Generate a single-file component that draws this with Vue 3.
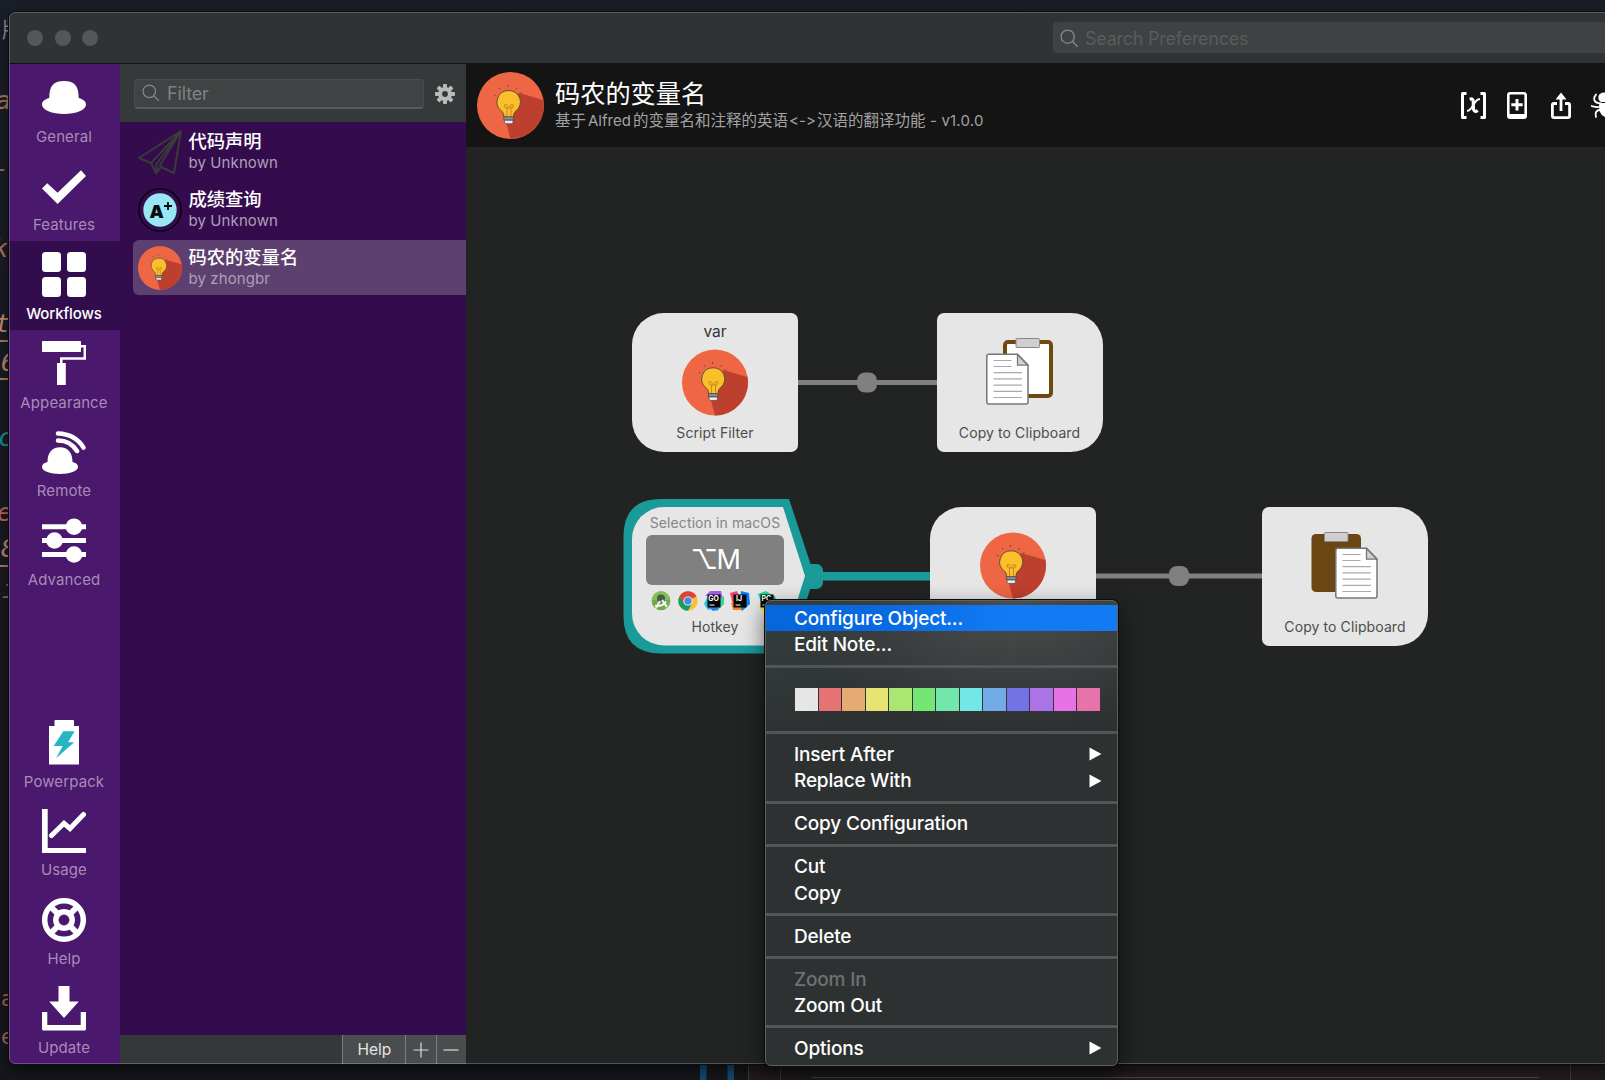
<script setup>
const topTabs = [
  { name: 'General', icon: 'hat' },
  { name: 'Features', icon: 'check' },
  { name: 'Workflows', icon: 'grid', active: true },
  { name: 'Appearance', icon: 'roller' },
  { name: 'Remote', icon: 'remote' },
  { name: 'Advanced', icon: 'sliders' },
]
const bottomTabs = [
  { name: 'Powerpack', icon: 'battery' },
  { name: 'Usage', icon: 'chart' },
  { name: 'Help', icon: 'ring' },
  { name: 'Update', icon: 'download' },
]
const groups = [topTabs, bottomTabs]

const icons = {
  hat: '<path d="M7.3 23C7.3 11.500 11 6 22 6s14.700 5.500 14.700 17c5 1.500 7.300 3.500 7.300 6.500 0 5.500-10 9.500-22 9.500S0 35 0 29.500c0-3 2.300-5 7.300-6.500z"/>',
  check: '<path d="M0 24.500 5.200 19.200 15.600 28.800 39 6.300 44 12 15.600 40z"/>',
  grid: '<rect width="19" height="20" rx="3.500"/><rect x="25" width="19" height="20" rx="3.500"/><rect y="25" width="19" height="20" rx="3.500"/><rect x="25" y="25" width="19" height="20" rx="3.500"/>',
  roller: '<rect width="39" height="11" rx=".8"/><path d="M39 5.200h3.800v12.400H19.300V23" fill="none" stroke="#fff" stroke-width="2.500"/><rect x="15" y="22" width="8.800" height="22"/>',
  remote: '<path d="M5.500 32C5.500 23 10 17.300 18 17.300S30.500 23 30.500 32C34 32.500 36 34.500 36 37c0 4-8 7-18 7S0 41 0 37c0-2.500 2-4.500 5.500-5z"/><path d="M16 3.600c11 .3 20 5.200 25.500 14M16 10.500c8 0 14.500 3.500 19 10.500" fill="none" stroke="#fff" stroke-width="4.500" stroke-linecap="round"/>',
  sliders: '<path d="M0 6.200h44v5H0zM0 20h44v5H0zM0 34h44v5H0z"/><circle cx="32" cy="8.700" r="8.300"/><circle cx="12.500" cy="22.500" r="8.300"/><circle cx="32" cy="36.500" r="8.300"/>',
  battery: '<path d="M12.500 1q0-1 1-1h17.500q1 0 1 1v5h5v38.500H7V6h5.500z"/><path d="M21.300 11.300h11.400L26 22.300h6.200L14 38.300 20.700 26h-9z" fill="#27b5c6"/>',
  chart: '<path d="M0 0h5.700v39H44v5H0z"/><path d="m9.500 26.500 12.500-12.200 6 5.200L41.500 5.500" fill="none" stroke="#fff" stroke-width="5" stroke-linecap="round"/>',
  ring: '<g fill="none" stroke="#fff"><circle cx="22" cy="22" r="19.300" stroke-width="5.500"/><circle cx="22" cy="22" r="8.200" stroke-width="5.500"/><path d="m7.500 7.500 8 8M36.500 7.500l-8 8M7.500 36.500l8-8M36.500 36.500l-8-8" stroke-width="6"/></g>',
  download: '<path d="M16.500 0h11v15.500h9.300L22 32 7.200 15.500h9.300zM0 26h5.300v13h33.400V26H44v17q0 1.500-1.500 1.500h-41Q0 44.500 0 43z"/>',
}

const workflows = [
  { name: '代码声明', by: 'by Unknown', icon: 'plane' },
  { name: '成绩查询', by: 'by Unknown', icon: 'grade' },
  { name: '码农的变量名', by: 'by zhongbr', icon: 'bulb', active: true },
]

const bulb = `
  <circle cx="33" cy="33" r="33" fill="#ee6644"/>
  <path d="M41 20.500 65.500 27.500A33 33 0 0 1 33 66L28.500 49z" fill="#bd402f"/>
  <path d="M31 18.300a11.200 11.200 0 0 0-7 20c2 1.800 2.500 3 2.500 6h9.500c0-3 .5-4.200 2.500-6a11.200 11.200 0 0 0-7.500-20z" fill="#fcbf29" stroke="#4b4a45" stroke-width=".9"/>
  <path d="M29.500 44V35.500q-2.500 0-2.500-2t2-1.500 1 3.500h3q-1-3.500 1-3.500t2 1.500-2.500 2V44" fill="none" stroke="#b3701f" stroke-width=".7"/>
  <rect x="26.500" y="44.300" width="9.500" height="3" fill="#8e8f93" stroke="#4b4a45" stroke-width=".7"/>
  <path d="M27 47.500h8.500v2.500l-1.500 1h-5.500L27 50z" fill="#e8eaed" stroke="#4b4a45" stroke-width=".7"/>
  <path d="M30.500 12.500v2M22 15.500l1 1.500M39.500 15.500l-1 1.500M17 22.500l1.500 1M44.500 20l-1.500 1" stroke="#5a3b33" stroke-width=".8"/>`

const paper = `
  <path d="M2.500.8H31.500L42 11.500V48.500q0 2-2 2H2.800q-2 0-2-2V2.800q0-2 2-2z" fill="#fff" stroke="#777" stroke-width="1.500"/>
  <path d="M31.500 1v10.700h10.300z" fill="#d2d2d2" stroke="#777" stroke-width="1.300"/>
  <path d="M7.500 7h18M7.500 13h18M7.500 19.200h28.500M7.500 25.400h28.500M7.500 31.600h28.500M7.500 37.800h28.500M7.500 44h28.500" stroke="#aaa" stroke-width="1.200"/>`
const clip = '<rect x="13" y="-1.500" width="23.500" height="9" rx=".8" fill="#cfcfcf" stroke="#888" stroke-width="1"/>'
const copyFront = `
  <g transform="translate(17 2)"><rect x="2" y="2" width="46" height="54" rx="3" fill="#fff" stroke="#70490f" stroke-width="4"/>${clip}</g>
  <g transform="translate(0 15.500)">${paper}</g>`
const copyBack = `
  <g transform="translate(.5 2)"><rect width="49.500" height="58" rx="4.500" fill="#6b4612"/>${clip}</g>
  <g transform="translate(24 15.500)">${paper}</g>`

const menu = [
  { label: 'Configure Object...', hot: true },
  { label: 'Edit Note...' },
  { sep: true }, { colors: true }, { sep: true },
  { label: 'Insert After', sub: true },
  { label: 'Replace With', sub: true },
  { sep: true },
  { label: 'Copy Configuration' },
  { sep: true },
  { label: 'Cut' },
  { label: 'Copy' },
  { sep: true },
  { label: 'Delete' },
  { sep: true },
  { label: 'Zoom In', off: true },
  { label: 'Zoom Out' },
  { sep: true },
  { label: 'Options', sub: true },
]
const colors = ['#e6e6e6', '#e67373', '#e6ab73', '#e6e373', '#abe673', '#73e673', '#73e6ab', '#73e6e6', '#73abe6', '#7373e6', '#ab73e6', '#e673e6', '#e673ab']

// Pieces of the code editor that peek out from behind the window
const scraps = [
  { t: '版', x: 2, y: 30, c: '#8f9296', up: true },
  { t: 'a', x: -4, y: 101, c: '#a8765c' },
  { t: '-', x: -6, y: 169, c: '#8a6a56' },
  { t: 'k', x: -7, y: 249, c: '#a8765c' },
  { t: 't', x: -5, y: 324, c: '#c08a6a', line: 341 },
  { t: '6', x: 1, y: 363, c: '#b98668', line: 379 },
  { t: 'c', x: -2, y: 438, c: '#16898c' },
  { t: 'e', x: -3, y: 513, c: '#b5655a' },
  { t: '8', x: 1, y: 549, c: '#b98668', line: 566 },
  { t: 'i', x: 2, y: 590, c: '#8a6a56' },
  { t: 'a', x: 1, y: 999, c: '#a5625a', up: true },
  { t: 'e', x: 1, y: 1037, c: '#a5625a', up: true },
]
</script>

<template>
  <div class="desktop">
    <div class="behind">
      <template v-for="s in scraps" :key="s.y">
        <span class="scrap" :class="{ up: s.up }" :style="{ left: s.x + 'px', top: s.y - 15 + 'px', color: s.c }">{{ s.t }}</span>
        <i v-if="s.line" class="rule" :style="{ top: s.line - 1 + 'px' }"></i>
      </template>
      <svg class="under" width="1605" height="17">
        <rect x="748" width="857" height="17" fill="#231d1f" />
        <rect x="700" width="6.500" height="17" fill="#134a72" /><rect x="727.500" width="6.500" height="17" fill="#134a72" />
        <path d="M748.500 0V17M780.500 0V17M1570.500 0V17" stroke="#413b3d" />
        <path d="M812 14.500H1539" stroke="#4a4646" />
      </svg>
    </div>

    <div class="window">
      <header class="titlebar">
        <div class="lights"><i></i><i></i><i></i></div>
        <div class="search">
          <svg width="19" height="19" viewBox="0 0 19 19" fill="none" stroke="#85888a" stroke-width="1.300"><circle cx="7.700" cy="7.700" r="6.600" /><path d="m12.500 12.500 5.200 5.200" /></svg>
          <span>Search Preferences</span>
        </div>
      </header>

      <div class="body">
        <nav class="tabs">
          <div v-for="(g, n) in groups" :key="n">
            <div v-for="t in g" :key="t.name" class="tab" :class="{ active: t.active }">
              <svg width="44" height="45" viewBox="0 0 44 45" fill="#fff" v-html="icons[t.icon]"></svg>
              <span>{{ t.name }}</span>
            </div>
          </div>
        </nav>

        <aside class="list">
          <div class="filterbar">
            <div class="filter">
              <svg width="18" height="18" viewBox="0 0 19 19" fill="none" stroke="#85888a" stroke-width="1.300"><circle cx="7.700" cy="7.700" r="6.600" /><path d="m12.500 12.500 5.200 5.200" /></svg>
              <span>Filter</span>
            </div>
            <svg class="gear" width="20" height="20" viewBox="-10 -10 20 20">
              <g fill="#b9bbbb"><rect v-for="a in 8" :key="a" x="-2" y="-10" width="4" height="6" rx=".8" :transform="`rotate(${a * 45})`" /></g>
              <circle r="4.900" fill="none" stroke="#b9bbbb" stroke-width="4" />
            </svg>
          </div>
          <div class="rows">
            <div v-for="w in workflows" :key="w.name" class="row" :class="{ active: w.active }">
              <svg v-if="w.icon === 'bulb'" width="44" height="44" viewBox="0 0 66 66" v-html="bulb"></svg>
              <svg v-else-if="w.icon === 'plane'" width="44" height="44" viewBox="0 0 44 44" fill="none" stroke="#3a3a36" stroke-width="2" stroke-linejoin="round">
                <path d="M43 1 1 28l12 5 5 10 5-6 13 6zM43 1 13 33M43 1 18.500 34v8M43 1 22 35l2 2" />
              </svg>
              <svg v-else width="44" height="44" viewBox="0 0 44 44">
                <circle cx="22" cy="22" r="21.200" fill="none" stroke="#0a0410" stroke-width="1.600" />
                <circle cx="22" cy="22" r="16.700" fill="#97e7f5" />
                <text x="11.500" y="29.500" class="gradeA">A</text>
                <path d="M30 14v8M26 18h8" stroke="#0a0a10" stroke-width="1.900" />
              </svg>
              <div class="names"><b>{{ w.name }}</b><span>{{ w.by }}</span></div>
            </div>
          </div>
          <div class="footer">
            <span class="help">Help</span>
            <span><svg width="16" height="16" stroke="#dcdddd" stroke-width="1.200"><path d="M8 .5v15M.5 8h15" /></svg></span>
            <span><svg width="16" height="16" stroke="#dcdddd" stroke-width="1.200"><path d="M.5 8h15" /></svg></span>
          </div>
        </aside>

        <main class="editor">
          <div class="head">
            <svg width="67" height="67" viewBox="0 0 66 66" v-html="bulb"></svg>
            <div class="titles">
              <h1>码农的变量名</h1>
              <p>基于<em>Alfred</em>的变量名和注释的英语<em class="arrow">&lt;-&gt;</em>汉语的翻译功能<em class="ver"> - v1.0.0</em></p>
            </div>
            <div class="tools">
              <svg width="25" height="27" viewBox="0 0 25 27" fill="none" stroke="#fff">
                <path d="M5.500 1.500H1.500V25.500H5.500M19.500 1.500h4V25.500h-4" stroke-width="3" stroke-linejoin="round" />
                <path d="M8.800 7.500C12.500 5.500 12.500 9 12.300 13s.5 8.500 4.500 5.500" stroke-width="3.200" />
                <path d="M19 7.300C15.500 6.500 14 10.500 12.300 13S9 19.500 6 18.700" stroke-width="1.900" />
              </svg>
              <svg width="20" height="27" viewBox="0 0 20 27" fill="none" stroke="#fff">
                <rect x="1.300" y="1.300" width="17.400" height="24.400" rx="2" stroke-width="2.600" /><path d="M1 24h18" stroke-width="4" /><path d="M10 7v11.500M4.300 12.800h11.400" stroke-width="3" />
              </svg>
              <svg class="share" width="20" height="27" viewBox="0 0 20 27" fill="none" stroke="#fff" stroke-width="2.800">
                <path d="M6 11.500H2.800Q1.400 11.500 1.400 13V24q0 1.600 1.600 1.600H17q1.600 0 1.600-1.600V13q0-1.500-1.400-1.500H14" /><path d="M10 19V6" /><path d="m4.500 7.500 5.500-7 5.500 7z" fill="#fff" stroke="none" />
              </svg>
              <svg width="26" height="27" viewBox="0 0 26 27" fill="none" stroke="#fff" stroke-width="1.800">
                <path d="M10 11.500C3 11 1.500 7 5 2.500M9 14.500c-3 1.500-5 .5-8.500-.5M9 18c-4 0-5 3-4 7" stroke-linecap="round" />
                <path d="M7.500 4Q9 .5 13 .5h5V10H10Q7 9 7.500 4z" fill="#fff" stroke="none" />
                <path d="M8.500 11H20V26Q11 26 9 20 7.500 15 8.500 11z" fill="#fff" stroke="none" />
              </svg>
            </div>
          </div>

          <div class="canvas">
            <svg class="wires" width="1139" height="916" viewBox="466 147 1139 916">
              <path d="M797 382.500H938M1095 576h168" stroke="#808080" stroke-width="5" />
              <rect x="857" y="372.500" width="20" height="20" rx="8" fill="#808080" />
              <rect x="1169" y="566" width="20" height="20" rx="8" fill="#808080" />
              <path d="M820 576.300H930" stroke="#1a9a99" stroke-width="8.500" />
              <path d="M661 499H789L814.500 576 789 653.500H661Q623.500 653.500 623.500 616V536.500Q623.500 499 661 499z" fill="#1a9a99" />
              <rect x="800" y="564" width="23" height="25" rx="6.500" fill="#1a9a99" />
              <path d="M664 507H783L805 576 783 645.500H664A32 32 0 0 1 632 613.500V539A32 32 0 0 1 664 507z" fill="#e6e6e6" />
            </svg>

            <div class="node input" style="left: 166px; top: 166px">
              <span class="kw">var</span>
              <svg width="66" height="67" viewBox="0 0 66 66" v-html="bulb"></svg>
              <span class="cap">Script Filter</span>
            </div>
            <div class="node output" style="left: 470.500px; top: 166px">
              <svg class="cb" width="68" height="68" viewBox="0 0 68 68" v-html="copyFront"></svg>
              <span class="cap">Copy to Clipboard</span>
            </div>
            <div class="hotkey">
              <span class="hint">Selection in macOS</span>
              <span class="key">⌥M</span>
              <div class="apps">
                <svg viewBox="0 0 20 20"><circle cx="10" cy="10" r="9.300" fill="#72a94a" /><path d="M1 9a9 9 0 0 1 18 0z" fill="#85bd57" /><circle cx="10" cy="7.500" r="4" fill="#4b5a50" /><path d="m9 10-4 7M11 9l5 7" stroke="#e8efe4" stroke-width="2.200" /><path d="M4 14.500q7 2 11-4" stroke="#fff" stroke-width="1.600" fill="none" /></svg>
                <svg viewBox="0 0 20 20"><circle cx="10" cy="10" r="9.700" fill="#fbc02d" /><path d="M10 10 1.600 5.150A9.700 9.700 0 0 1 18.400 5.150z" fill="#db4437" /><path d="M1.600 5.150A9.700 9.700 0 0 0 10 19.700L14 12.500 6 12z" fill="#12a05c" /><path d="M1.600 5.150 6 12.500 10 5.700h8.700L16 3z" fill="#db4437" /><circle cx="10" cy="10" r="4.600" fill="#fff" /><circle cx="10" cy="10" r="3.700" fill="#4a86f0" /></svg>
                <svg viewBox="0 0 20 20"><path d="M1 5 6 0l5 4z" fill="#b45cf2" /><path d="M6 0h11l2 8-5 4z" fill="#a259f0" /><path d="M0 13 5 3l4 14-5 2z" fill="#14c8e0" /><path d="m13 20 7-7V5l-8 5z" fill="#38d39a" /><path d="m4 16 9-4 1 7-5 1z" fill="#2b7bf5" /><rect x="3.500" y="3.500" width="13" height="13" fill="#050505" /><text x="4.300" y="10.200">GO</text><path d="M5.500 14h5" stroke="#fff" /></svg>
                <svg viewBox="0 0 20 20"><path d="M0 2 7 0l4 9-7 9z" fill="#fd3f67" /><path d="m11 0 8 2 1 11-8 7-3-5z" fill="#087cfa" /><path d="m1 12 7-4 4 11H3z" fill="#fc801d" /><rect x="3.500" y="3.500" width="13" height="13" fill="#050505" /><text x="6" y="10.200">IJ</text><path d="M5.500 14h5" stroke="#fff" /></svg>
                <svg viewBox="0 0 20 20"><path d="M1 3 9 0l9 6-12 10z" fill="#21d789" /><path d="m12 4 6 1 2 6-6 7z" fill="#10c4d8" /><path d="m2 12 10 1-1 7H4z" fill="#e8f04a" /><rect x="3.500" y="3.500" width="13" height="13" fill="#050505" /><text x="4.500" y="10.200">PC</text><path d="M5.500 14h5" stroke="#fff" /></svg>
              </div>
              <span class="cap">Hotkey</span>
            </div>
            <div class="node input" style="left: 463.500px; top: 360px">
              <span class="kw"></span>
              <svg class="lift" width="66" height="67" viewBox="0 0 66 66" v-html="bulb"></svg>
            </div>
            <div class="node output" style="left: 796px; top: 360px">
              <svg class="cb" width="68" height="68" viewBox="0 0 68 68" v-html="copyBack"></svg>
              <span class="cap">Copy to Clipboard</span>
            </div>
          </div>
        </main>
      </div>
    </div>

    <div class="menu">
      <template v-for="(m, i) in menu" :key="i">
        <hr v-if="m.sep" />
        <div v-else-if="m.colors" class="swatches"><i v-for="c in colors" :key="c" :style="{ background: c }"></i></div>
        <div v-else class="item" :class="{ hot: m.hot, off: m.off }">
          <span>{{ m.label }}</span>
          <svg v-if="m.sub" width="13" height="14"><path d="M.5.500 12.500 7 .5 13.500z" fill="#fff" /></svg>
        </div>
      </template>
    </div>
  </div>
</template>

<style>
body { background: #191b22; overflow: hidden; }
</style>

<style scoped>
.desktop {
  position: relative; width: 1605px; height: 1080px; overflow: hidden; box-sizing: border-box;
  padding: 12px 0 0 9px; background: linear-gradient(#1a1e29, #191b22 40%, #15171c);
  font-family: Inter, "Noto Sans CJK SC", sans-serif;
}
.behind { position: absolute; inset: 0; }
.scrap { position: absolute; font: italic 25px/30px "DejaVu Sans Mono", "Noto Sans CJK SC", monospace; white-space: pre; }
.scrap.up { font-style: normal; font-size: 21px; }
.rule { position: absolute; left: 0; width: 8px; height: 1.500px; background: #a8765c; }
.under { position: absolute; left: 0; top: 1063px; }
.window {
  position: relative; width: 1600px; height: 1052px; box-sizing: border-box; display: flex; flex-direction: column;
  border-radius: 6px 0 0 6px; overflow: hidden; background: #232524; box-shadow: 0 0 0 1px #0b0c0e, 0 6px 14px #0008;
}
.window::after { content: ""; position: absolute; inset: 0; border: 1px solid #ffffff3a; border-radius: 6px 0 0 6px; }
.titlebar { height: 51px; flex: none; display: flex; align-items: center; background: #2f3334; border-bottom: 1px solid #121313; }
.lights { display: flex; gap: 11.500px; margin-left: 18px; }
.lights i { width: 16px; height: 16px; border-radius: 50%; background: #535758; }
.search { margin-left: 955px; width: 600px; flex: none; height: 31px; border-radius: 4px; background: #3f4243; display: flex; align-items: center; padding-left: 7px; color: #595c5d; font-size: 18px; }
.search svg { margin: 1px 6px 0 0; }
.search span { letter-spacing: -.25px; margin-top: 2px; }
.body { flex: 1; display: flex; min-height: 0; }
.tabs { width: 111px; flex: none; background: #4a186c; display: flex; flex-direction: column; justify-content: space-between; }
.tab { height: 88.700px; box-sizing: border-box; padding: 11px 1px 0 0; display: flex; flex-direction: column; align-items: center; gap: 6.500px; color: #a98bb9; font-size: 15px; line-height: 20px; letter-spacing: .1px; }
.tab.active { background: #320d4d; color: #fff; font-weight: 500; letter-spacing: -.1px; }
.list { width: 346px; flex: none; background: #340c4e; display: flex; flex-direction: column; }
.filterbar { height: 58px; box-sizing: border-box; background: #353939; display: flex; align-items: center; padding: 1px 0 0 14px; }
.filter { width: 290px; height: 30px; box-sizing: border-box; border-radius: 4px; background: #3f4343; border: 1px solid #484c4c; border-bottom: 2px solid #565a5a; display: flex; align-items: center; padding-left: 7px; color: #7f8283; font-size: 18px; }
.filter svg { margin-right: 7px; }
.filter span { letter-spacing: -.15px; margin-top: 1px; }
.gear { margin-left: 11px; }
.rows { flex: 1; padding: 2px 0 0 13px; display: flex; flex-direction: column; gap: 3.200px; }
.row { height: 55px; display: flex; align-items: center; padding-left: 4.500px; border-radius: 6px 0 0 6px; }
.row.active { background: #5d3f70; }
.row > svg { flex: none; }
.names { margin: 0 0 0 7px; display: flex; flex-direction: column; }
.names b { font-weight: 500; font-size: 18.300px; line-height: 22px; color: #fff; }
.names span { font-size: 15px; line-height: 22px; color: #ae9eb8; letter-spacing: .1px; }
.gradeA { font: 900 18px Inter, sans-serif; fill: #0a0a10; }
.footer { height: 29px; display: flex; justify-content: flex-end; background: #343838; }
.footer span { width: 30.300px; box-sizing: border-box; background: #4a4d4e; border-left: 1px solid #7b7e7e; display: flex; align-items: center; justify-content: center; }
.footer .help { width: 63px; color: #e4e4e4; font-size: 15.500px; }
.editor { flex: 1; min-width: 0; display: flex; flex-direction: column; }
.head { height: 83px; background: #141414; display: flex; align-items: center; padding-left: 11px; overflow: hidden; }
.head > *, .tools > * { flex: none; }
.titles { width: 450px; margin-left: 11px; }
h1 { margin: -1px 0 1px; font-weight: 400; font-size: 25.200px; line-height: 30px; color: #fff; }
p { margin: 0; font-size: 15.500px; line-height: 22px; color: #a2a2a2; white-space: pre; }
p em { font-style: normal; font-size: 15px; margin: 0 2px; letter-spacing: 0; }
p em.arrow { margin: 0 1px; letter-spacing: .1px; }
p em.ver { margin: 0; letter-spacing: .2px; }
.tools { display: flex; margin-left: 455.500px; gap: 21.500px; }
.tools .share { margin: 0 -1.500px 0 2.500px; }
.canvas { position: relative; flex: 1; background: #222424; }
.wires { position: absolute; left: 0; top: 0; }
.node { position: absolute; width: 166px; height: 139px; box-sizing: border-box; background: #e6e6e6; display: flex; flex-direction: column; align-items: center; }
.input { border-radius: 32px 7px 7px 32px; padding-top: 9px; }
.output { border-radius: 7px 32px 32px 7px; padding-top: 25px; }
.kw { height: 20px; font-size: 15.500px; line-height: 20px; color: #333; margin-bottom: 7px; }
.lift { margin-top: -11px; }
.cap { font-size: 14px; line-height: 20px; color: #4d4d4d; margin-top: 7px; letter-spacing: .1px; }
.cb + .cap { margin-top: 17px; }
.hotkey { position: absolute; left: 166px; top: 360px; width: 166px; display: flex; flex-direction: column; align-items: center; }
.hint { font-size: 14px; line-height: 20px; color: #858585; margin-top: 6px; letter-spacing: .1px; white-space: nowrap; }
.key { width: 138px; height: 49.500px; margin-top: 2px; border-radius: 6px; background: #808080; color: #fff; font-size: 27px; letter-spacing: -1.500px; display: flex; align-items: center; justify-content: center; }
.apps { display: flex; gap: 6.300px; margin: 6px 2px 0 0; }
.apps svg { width: 20px; height: 20px; }
.apps text { font: bold 7px Inter, sans-serif; fill: #fff; }
.hotkey .cap { margin-top: 6px; }
.menu {
  position: absolute; left: 765px; top: 600px; width: 353px; height: 466px; box-sizing: border-box; padding-top: 4px;
  border-radius: 6px; border: 1px solid #5d6161; overflow: hidden;
  background: radial-gradient(230px 130px at 245px 0, #4c4e4e, #4c4e4e00), radial-gradient(140px 130px at 0 10px, #343f3e, #343f3e00), #2e3132;
  box-shadow: 0 0 0 1px #0c0d0d, 0 8px 22px #0009;
}
.item { height: 26.400px; display: flex; align-items: center; justify-content: space-between; padding: 0 15.500px 0 28px; color: #fff; font-size: 19px; letter-spacing: -.17px; font-weight: 450; }
.item.hot { background: linear-gradient(90deg, #0667dc, #0768e0 30%, #127bf4 70%); }
.item.off { color: #6e7172; }
hr { margin: 6.800px 0; border: 0; height: 3px; background: #535657; }
.swatches { height: 50.200px; display: flex; align-items: center; gap: 1px; padding: 0 17px 0 29px; }
.swatches i { flex: 1; height: 22.500px; }
</style>
